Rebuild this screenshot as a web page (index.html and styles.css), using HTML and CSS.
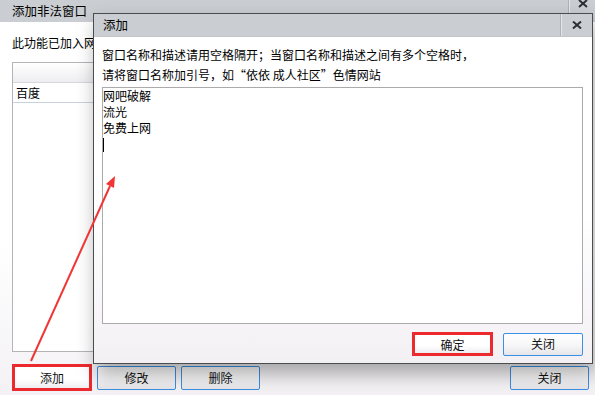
FILE: index.html
```html
<!DOCTYPE html>
<html lang="zh">
<head>
<meta charset="utf-8">
<title>添加非法窗口</title>
<link rel="stylesheet" href="styles.css">
</head>
<body>
<div class="outer">
  <div class="titlebar outer-title">
    <span class="title-text">添加非法窗口</span>
    <span class="title-sep"></span>
    <span class="close-btn">
      <svg width="10" height="9" viewBox="0 0 10 9"><path d="M1 1 L9 8 M9 1 L1 8" stroke="#2d3033" stroke-width="2"/></svg>
    </span>
  </div>
  <div class="outer-body">
    <p class="intro">此功能已加入网吧管理系统</p>
    <div class="list">
      <div class="list-head"></div>
      <div class="list-row">百度</div>
    </div>
    <div class="btn-row">
      <button class="btn btn-marked btn-add">添加</button>
      <button class="btn">修改</button>
      <button class="btn">删除</button>
      <span class="spacer"></span>
      <button class="btn">关闭</button>
    </div>
  </div>
</div>

<div class="dialog">
  <div class="titlebar dialog-title">
    <span class="title-text">添加</span>
    <span class="title-sep"></span>
    <span class="close-btn">
      <svg width="10" height="8" viewBox="0 0 10 8"><path d="M1 0.5 L9 7.5 M9 0.5 L1 7.5" stroke="#2d3033" stroke-width="2"/></svg>
    </span>
  </div>
  <div class="dialog-body">
    <p class="hint">窗口名称和描述请用空格隔开；当窗口名称和描述之间有多个空格时，</p>
    <p class="hint">请将窗口名称加引号，如“依依 成人社区”色情网站</p>
    <div class="editor">
      <div class="line">网吧破解</div>
      <div class="line">流光</div>
      <div class="line">免费上网</div>
      <div class="line"><span class="caret"></span></div>
    </div>
    <div class="dialog-btns">
      <button class="btn btn-marked btn-ok">确定</button>
      <button class="btn">关闭</button>
    </div>
  </div>
</div>

<svg class="arrow" width="595" height="395" viewBox="0 0 595 395">
  <line x1="31" y1="361" x2="110" y2="186" stroke="#f03535" stroke-width="2"/>
  <polygon points="115,176 106,184 114,188" fill="#f03535"/>
</svg>
</body>
</html>
```

FILE: styles.css
```css
html, body {
  margin: 0;
  padding: 0;
}
body {
  width: 595px;
  height: 395px;
  overflow: hidden;
  position: relative;
  background: #f3f1f4;
  font-family: "Noto Sans CJK SC", "Noto Sans", sans-serif;
  font-size: 12px;
  color: #000;
}
p { margin: 0; }

.outer {
  height: 395px;
  display: flex;
  flex-direction: column;
}

.titlebar {
  display: flex;
  align-items: center;
  background: #cacdd1;
  flex: none;
}
.title-text {
  font-size: 12.5px;
  line-height: 16px;
}
.title-sep {
  margin-left: auto;
  align-self: stretch;
  width: 1px;
  background: #aeb2b6;
  border-right: 1px solid #e4e6e8;
}
.close-btn {
  width: 26px;
  display: flex;
  justify-content: center;
}
.close-btn svg { display: block; }

.outer-title {
  height: 22px;
  padding-left: 12px;
}
.outer-title .close-btn {
  width: 25px;
  align-self: flex-start;
  margin-top: -1px;
}

.outer-body {
  flex: 1;
  display: flex;
  flex-direction: column;
  padding: 12px 6px 4px 12px;
  background: linear-gradient(#ffffff 0%, #ffffff 60%, #f3f1f4 100%);
  min-height: 0;
}
.intro {
  line-height: 17px;
  width: 81px;
  white-space: nowrap;
  overflow: hidden;
}
.list {
  margin-top: 11px;
  flex: 1;
  border: 1px solid #b4b4b8;
  background: #fff;
  margin-right: 6px;
}
.list-head {
  height: 19px;
  border-bottom: 1px solid #d6d8dc;
  background: linear-gradient(#ffffff, #eeeef2);
}
.list-row {
  height: 19px;
  line-height: 19px;
  padding-left: 3px;
  border-bottom: 1px solid #c8d2de;
}

.btn-row {
  margin-top: 12px;
  height: 27px;
  display: flex;
  align-items: center;
  gap: 5px;
}
.spacer { flex: 1; }

.btn {
  width: 79px;
  height: 24px;
  padding: 0;
  border: 1px solid #3a8fe6;
  border-radius: 2px;
  background: linear-gradient(#ffffff 0%, #f6f6f8 55%, #e6e6ea 100%);
  font-family: inherit;
  font-size: 12px;
  color: #111;
  line-height: 20px;
}
.btn-marked {
  border: 3px solid #ec2a2e;
  border-radius: 0;
  background: linear-gradient(#ffffff 0%, #ffffff 60%, #eeeef2 100%);
}
.btn-add {
  width: 80px;
  height: 27px;
}
.btn-ok {
  width: 81px;
  height: 24px;
}

.dialog {
  position: absolute;
  left: 93px;
  top: 13px;
  width: 500px;
  height: 351px;
  box-sizing: border-box;
  border: 1px solid #4a4d50;
  display: flex;
  flex-direction: column;
  box-shadow: 3px 10px 18px rgba(0, 0, 0, 0.33);
  background: #fff;
}
.dialog-title {
  height: 22px;
  padding-left: 9px;
  border-bottom: 1px solid #c2c5c9;
}
.dialog-title .close-btn {
  width: 30px;
}
.dialog-body {
  flex: 1;
  display: flex;
  flex-direction: column;
  padding: 8px 9px 7px 8px;
  background: linear-gradient(#ffffff 0%, #ffffff 55%, #f3f0f4 100%);
}
.hint {
  line-height: 20px;
  white-space: nowrap;
}
.editor {
  margin-top: 2px;
  height: 237px;
  box-sizing: border-box;
  border: 1px solid #ababab;
  background: #fff;
}
.line {
  line-height: 16px;
  height: 16px;
}
.caret {
  display: inline-block;
  width: 1px;
  height: 14px;
  background: #000;
  vertical-align: -3px;
}
.dialog-btns {
  margin-top: 8px;
  display: flex;
  justify-content: flex-end;
  align-items: center;
  gap: 10px;
}
.dialog-btns .btn:last-child {
  width: 80px;
  height: 23px;
}

.arrow {
  position: absolute;
  left: 0;
  top: 0;
  pointer-events: none;
}
```
